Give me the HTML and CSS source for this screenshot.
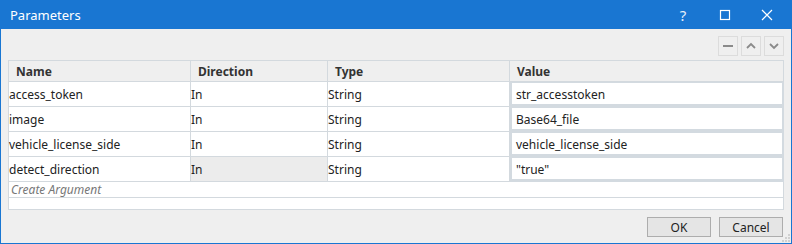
FILE: index.html
```html
<!DOCTYPE html>
<html>
<head>
<meta charset="utf-8">
<link rel="stylesheet" href="styles.css">
</head>
<body>
<div class="window">
  <div class="titlebar">
    <span class="title">Parameters</span>
    <div class="title-btns">
      <span class="tb help">?</span>
      <span class="tb">
        <svg width="12" height="12" viewBox="0 0 12 12"><rect x="1.5" y="1.5" width="9" height="9" fill="none" stroke="#fff" stroke-width="1.2"/></svg>
      </span>
      <span class="tb">
        <svg width="12" height="12" viewBox="0 0 12 12"><path d="M1 1 L11 11 M11 1 L1 11" stroke="#fff" stroke-width="1.2"/></svg>
      </span>
    </div>
  </div>
  <div class="content">
    <div class="toolbar">
      <span class="tool"><svg width="12" height="12" viewBox="0 0 12 12"><path d="M1 6 H11" stroke="#8a8a8a" stroke-width="2"/></svg></span>
      <span class="tool"><svg width="12" height="12" viewBox="0 0 12 12"><path d="M2 8 L6 4 L10 8" fill="none" stroke="#8a8a8a" stroke-width="1.8"/></svg></span>
      <span class="tool"><svg width="12" height="12" viewBox="0 0 12 12"><path d="M2 4 L6 8 L10 4" fill="none" stroke="#8a8a8a" stroke-width="1.8"/></svg></span>
    </div>
    <div class="grid">
      <div class="hd">Name</div>
      <div class="hd">Direction</div>
      <div class="hd">Type</div>
      <div class="hd">Value</div>

      <div class="cell">access_token</div>
      <div class="cell">In</div>
      <div class="cell">String</div>
      <div class="cell val"><div class="input">str_accesstoken</div></div>

      <div class="cell">image</div>
      <div class="cell">In</div>
      <div class="cell">String</div>
      <div class="cell val"><div class="input">Base64_file</div></div>

      <div class="cell">vehicle_license_side</div>
      <div class="cell">In</div>
      <div class="cell">String</div>
      <div class="cell val"><div class="input">vehicle_license_side</div></div>

      <div class="cell">detect_direction</div>
      <div class="cell sel">In</div>
      <div class="cell">String</div>
      <div class="cell val"><div class="input">"true"</div></div>

      <div class="create">Create Argument</div>
      <div class="empty"></div>
    </div>
    <div class="footer">
      <button class="btn">OK</button>
      <button class="btn">Cancel</button>
    </div>
  </div>
  <svg class="grip" width="8" height="8" viewBox="0 0 8 8">
    <rect x="6" y="0" width="2" height="2" fill="#d0d0d0"/>
    <rect x="3" y="3" width="2" height="2" fill="#d0d0d0"/>
    <rect x="6" y="3" width="2" height="2" fill="#d0d0d0"/>
    <rect x="0" y="6" width="2" height="2" fill="#d0d0d0"/>
    <rect x="3" y="6" width="2" height="2" fill="#d0d0d0"/>
    <rect x="6" y="6" width="2" height="2" fill="#d0d0d0"/>
  </svg>
</div>
</body>
</html>
```

FILE: styles.css
```css
html, body {
  margin: 0;
  padding: 0;
}
body {
  font-family: "Noto Sans", "Open Sans", sans-serif;
  font-size: 12px;
  color: #222;
}
.window {
  position: relative;
  width: 792px;
  height: 244px;
  box-sizing: border-box;
  border: 1px solid #1976d2;
  border-top: none;
  background: #efefef;
  display: flex;
  flex-direction: column;
}
.titlebar {
  height: 29px;
  margin: 0 -1px;
  background: #1976d2;
  display: flex;
  align-items: center;
  justify-content: space-between;
  color: #fff;
  flex-shrink: 0;
}
.title {
  font-size: 13px;
  padding-left: 10px;
  padding-top: 1px;
}
.title-btns {
  display: flex;
  height: 29px;
  padding-right: 4px;
}
.tb {
  width: 42px;
  display: flex;
  align-items: center;
  justify-content: center;
}
.help {
  font-size: 15px;
  font-family: "Noto Sans", sans-serif;
  color: #e8f0fb;
  padding-top: 1px;
}
.content {
  padding: 7px 7px 0 7px;
  display: flex;
  flex-direction: column;
}
.toolbar {
  display: flex;
  justify-content: flex-end;
  gap: 3px;
  height: 20px;
}
.tool {
  width: 18px;
  height: 18px;
  border: 1px solid #dcdcdc;
  display: flex;
  align-items: center;
  justify-content: center;
}
.grid {
  margin-top: 4px;
  display: grid;
  grid-template-columns: 182px 137px 182px 274px;
  grid-template-rows: 21px 25px 25px 25px 25px 16px 12px;
  border-left: 1px solid #d3d9de;
  border-top: 1px solid #d3d9de;
  width: 776px;
  box-sizing: border-box;
}
.hd, .cell, .create, .empty {
  border-right: 1px solid #d3d9de;
  border-bottom: 1px solid #d3d9de;
  box-sizing: border-box;
}
.hd {
  background: #efefef;
  font-weight: bold;
  color: #333;
  padding-left: 7px;
  display: flex;
  align-items: center;
}
.cell {
  background: #fff;
  padding-left: 0;
  display: flex;
  align-items: center;
}
.cell.sel {
  background: #ececec;
}
.cell.val {
  padding: 0;
  align-items: stretch;
  border-right-width: 0;
  border-bottom-width: 0;
}
.input {
  flex: 1;
  background: #fff;
  border: 2px solid #d3dae0;
  border-top-width: 1px;
  border-bottom-width: 3px;
  padding-left: 4px;
  display: flex;
  align-items: center;
  padding-top: 1px;
}
.create {
  grid-column: 1 / 5;
  background: #fff;
  font-style: italic;
  color: #777;
  padding-left: 2px;
  display: flex;
  align-items: center;
}
.empty {
  grid-column: 1 / 5;
  background: #fff;
}
.footer {
  display: flex;
  justify-content: flex-end;
  gap: 8px;
  margin-top: 7px;
  padding-right: 1px;
}
.btn {
  width: 64px;
  height: 20px;
  border: 1px solid #adadad;
  background: #e5e5e5;
  font-family: "Noto Sans", "Open Sans", sans-serif;
  font-size: 12px;
  color: #222;
  padding: 0;
}
.grip {
  position: absolute;
  right: 1px;
  bottom: 1px;
}
```
